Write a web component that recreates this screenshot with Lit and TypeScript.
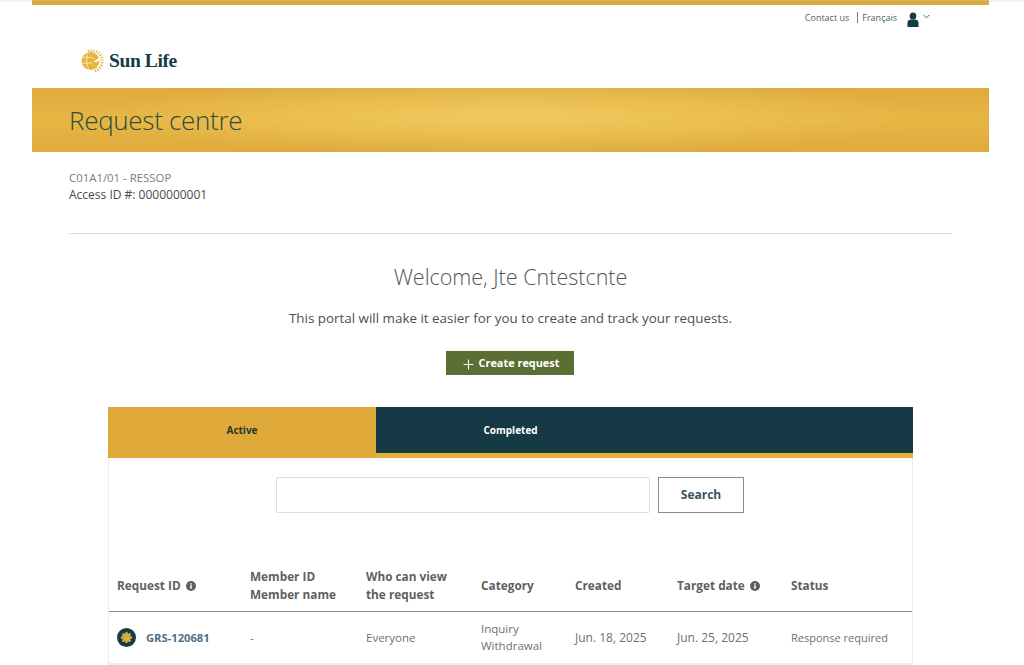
import { LitElement, css, html, svg } from 'lit';
import { customElement } from 'lit/decorators.js';

const info = html`<svg class="info" viewBox="0 0 10 10"><circle cx="5" cy="5" r="5" fill="#5f5f5f" /><rect x="4.2" y="4.3" width="1.6" height="3.4" fill="#fff" /><rect x="4.2" y="2.3" width="1.6" height="1.3" fill="#fff" /></svg>`;

@customElement('app-root')
export class AppRoot extends LitElement {
  static override styles = css`
    :host {
      display: block;
      height: 665px;
      overflow: hidden;
      background: linear-gradient(180deg, #f3f3f3 2px, #fff 2px);
      font-family: 'Open Sans', 'Noto Sans', sans-serif;
      color: #5b5b5b;
    }
    .page {
      width: 957px;
      margin-left: 32px;
      background: #fff;
    }
    .topline {
      height: 5px;
      background: linear-gradient(180deg, #cfb27c 1px, #dfaa3c 1px);
    }
    .util {
      height: 30px;
      display: flex;
      justify-content: flex-end;
      align-items: flex-start;
      padding: 7px 59px 0 0;
      box-sizing: border-box;
      font-size: 9px;
      color: #4b5f6b;
    }
    .util .contact {
      line-height: 11px;
    }
    .util .lang {
      line-height: 11px;
      margin-left: 8px;
      padding-left: 4px;
      border-left: 1px solid #6b7f8a;
    }
    .util .user {
      margin-left: 10px;
      width: 12px;
      height: 15px;
      display: block;
    }
    .util .chev {
      margin-left: 4px;
      margin-top: 2px;
      width: 7px;
      height: 5px;
      display: block;
    }
    .brand {
      height: 53px;
      padding-left: 48px;
      display: flex;
      align-items: flex-start;
      gap: 5px;
      padding-top: 14px;
      box-sizing: border-box;
    }
    .brand svg {
      width: 24px;
      height: 24px;
      display: block;
    }
    .brand .name {
      font-family: 'Liberation Serif', serif;
      font-weight: 700;
      font-size: 19.5px;
      letter-spacing: -0.4px;
      line-height: 24px;
      color: #143a48;
    }
    .hero {
      height: 64px;
      padding-left: 37px;
      display: flex;
      align-items: center;
      background:
        radial-gradient(ellipse 420px 40px at 480px 28px, #f0c95e 0%, rgba(240, 201, 94, 0) 100%),
        linear-gradient(180deg, #deaa3c 0%, #e6b644 50%, #deaa3c 100%);
    }
    .hero h1 {
      margin: 0;
      font-size: 26px;
      letter-spacing: -0.3px;
      font-weight: 300;
      line-height: 32px;
      color: #2e4a3e;
    }
    .content {
      margin: 0 37px;
    }
    .account {
      padding: 17px 0 30px;
      border-bottom: 1px solid #dcdcdc;
      font-size: 12px;
      line-height: 17px;
    }
    .account .code {
      font-size: 11.4px;
      color: #7a7a7a;
    }
    .account .id {
      color: #4a4a4a;
    }
    .welcome {
      text-align: center;
      padding-top: 28px;
    }
    .welcome h2 {
      margin: 0;
      font-size: 21.5px;
      font-weight: 300;
      line-height: 30px;
      color: #555;
    }
    .welcome p {
      margin: 17px 0 0;
      font-size: 13.4px;
      line-height: 18px;
      color: #4f4f4f;
    }
    .create {
      margin: 24px 0 0 377px;
      width: 128px;
      height: 24px;
      display: flex;
      align-items: center;
      justify-content: center;
      gap: 5px;
      background: #5b6e34;
      color: #fff;
      font-size: 10.9px;
      font-weight: 700;
      border: 0;
      font-family: inherit;
      padding: 0 0 2px 2px;
    }
    .create svg {
      width: 11px;
      height: 11px;
      margin-top: 4px;
    }
    .card {
      margin: 32px 39px 0;
      border: solid #ececec;
      border-width: 0 1px 2px;
    }
    .tabs {
      display: flex;
      margin: 0 -1px;
      border-bottom: 5px solid #e4b03c;
      box-sizing: border-box;
      height: 51px;
      font-size: 10px;
      font-weight: 700;
    }
    .tab {
      display: flex;
      align-items: center;
      justify-content: center;
    }
    .tab.active {
      width: 268px;
      background: #dfa939;
      color: #1d3a30;
      margin-bottom: -5px;
      padding-bottom: 5px;
    }
    .tab.other {
      flex: 1;
      background: #153945;
      color: #fff;
      padding-right: 268px;
    }
    .search {
      display: flex;
      justify-content: center;
      gap: 8px;
      padding: 19px 1px 0 0;
    }
    .search .field {
      width: 372px;
      height: 34px;
      border: 1px solid #dedede;
      border-radius: 2px;
    }
    .search .go {
      width: 86px;
      height: 36px;
      box-sizing: border-box;
      border: 1px solid #7d8f97;
      background: #fff;
      color: #3a5563;
      font-family: inherit;
      font-size: 12px;
      font-weight: 700;
      padding: 0 0 2px;
    }
    table {
      border-collapse: collapse;
      table-layout: fixed;
      width: 100%;
      margin-top: 46px;
    }
    th {
      text-align: left;
      font-size: 11.8px;
      line-height: 18px;
      font-weight: 700;
      color: #5f5f5f;
      height: 52px;
      padding: 0 0 0 8px;
      box-sizing: border-box;
      border-bottom: 1px solid #8c8c8c;
    }
    td {
      font-size: 11.5px;
      line-height: 17px;
      color: #6f6f6f;
      height: 52px;
      padding: 0 0 0 8px;
      box-sizing: border-box;
    }
    td.date {
      font-size: 12px;
    }
    td.status {
      font-size: 11px;
    }
    .info {
      width: 10px;
      height: 10px;
      margin-left: 2px;
      vertical-align: -1px;
    }
    .rid {
      display: flex;
      align-items: center;
      gap: 10px;
      font-weight: 700;
      color: #4d6f88;
      font-size: 11.2px;
    }
    .rid svg {
      width: 19px;
      height: 19px;
      display: block;
    }
  `;

  private sun() {
    const rays = [];
    for (let a = -20; a <= 160; a += 15) {
      rays.push(svg`<rect x="11.5" y="0.3" width="1.1" height="2.800" fill="#e3ae3a" transform="rotate(${a} 12 12)" />`);
    }
    return html`<svg viewBox="0 0 24 24">
      ${rays}
      <circle cx="10.500" cy="12" r="9" fill="#e8b63e" />
      <path d="M3 8.500c4-1 8-.5 11 1.500M1.800 14c4 .5 8 .5 11-.5M8.500 3.500c-2.500 5-2.500 12 .5 17" fill="none" stroke="#fff" stroke-width="0.6" />
      <path d="M19.300 9c-2 1-4 2-5.500 4 2 0 4-.5 5.500-1.500z" fill="#fff" />
    </svg>`;
  }

  private flower() {
    const petals = [];
    for (let a = 0; a < 360; a += 45) {
      petals.push(svg`<ellipse cx="10" cy="5.700" rx="1.600" ry="1.800" fill="#c9a23a" transform="rotate(${a} 10 10)" />`);
    }
    return html`<svg viewBox="0 0 20 20">
      <circle cx="10" cy="10" r="10" fill="#163a47" />
      ${petals}
      <circle cx="10" cy="10" r="3.600" fill="#d9af45" />
    </svg>`;
  }

  override render() {
    return html`
      <div class="page">
        <div class="topline"></div>
        <div class="util">
          <span class="contact">Contact us</span>
          <span class="lang">Français</span>
          <svg class="user" viewBox="0 0 13 15" preserveAspectRatio="none">
            <circle cx="6.500" cy="4" r="3.600" fill="#163a47" />
            <path d="M0.500 15V11c0-2.500 2-3.600 3.500-3.600h5c1.500 0 3.500 1.100 3.500 3.600v4z" fill="#163a47" />
          </svg>
          <svg class="chev" viewBox="0 0 7 5">
            <path d="M0.700 1l2.800 2.800L6.300 1" fill="none" stroke="#4b5f6b" stroke-width="1" />
          </svg>
        </div>
        <div class="brand">
          ${this.sun()}
          <span class="name">Sun Life</span>
        </div>
        <div class="hero"><h1>Request centre</h1></div>
        <div class="content">
          <div class="account">
            <div class="code">C01A1/01 - RESSOP</div>
            <div class="id">Access ID #: 0000000001</div>
          </div>
          <div class="welcome">
            <h2>Welcome, Jte Cntestcnte</h2>
            <p>This portal will make it easier for you to create and track your requests.</p>
            <button class="create">
              <svg viewBox="0 0 10 10"><path d="M5 0.500v9M0.500 5h9" stroke="#fff" stroke-width="1" /></svg>
              Create request
            </button>
          </div>
          <div class="card">
            <div class="tabs">
              <div class="tab active">Active</div>
              <div class="tab other">Completed</div>
            </div>
            <div class="search">
              <div class="field"></div>
              <button class="go">Search</button>
            </div>
            <table>
              <colgroup>
                <col style="width:133px" /><col style="width:116px" /><col style="width:115px" /><col style="width:94px" /><col style="width:102px" /><col style="width:114px" /><col />
              </colgroup>
              <thead>
                <tr>
                  <th>Request ID ${info}</th>
                  <th>Member ID<br />Member name</th>
                  <th>Who can view<br />the request</th>
                  <th>Category</th>
                  <th>Created</th>
                  <th>Target date ${info}</th>
                  <th>Status</th>
                </tr>
              </thead>
              <tbody>
                <tr>
                  <td><div class="rid">${this.flower()}GRS-120681</div></td>
                  <td>-</td>
                  <td>Everyone</td>
                  <td>Inquiry<br />Withdrawal</td>
                  <td class="date">Jun. 18, 2025</td>
                  <td class="date">Jun. 25, 2025</td>
                  <td class="status">Response required</td>
                </tr>
              </tbody>
            </table>
          </div>
        </div>
      </div>
    `;
  }
}
